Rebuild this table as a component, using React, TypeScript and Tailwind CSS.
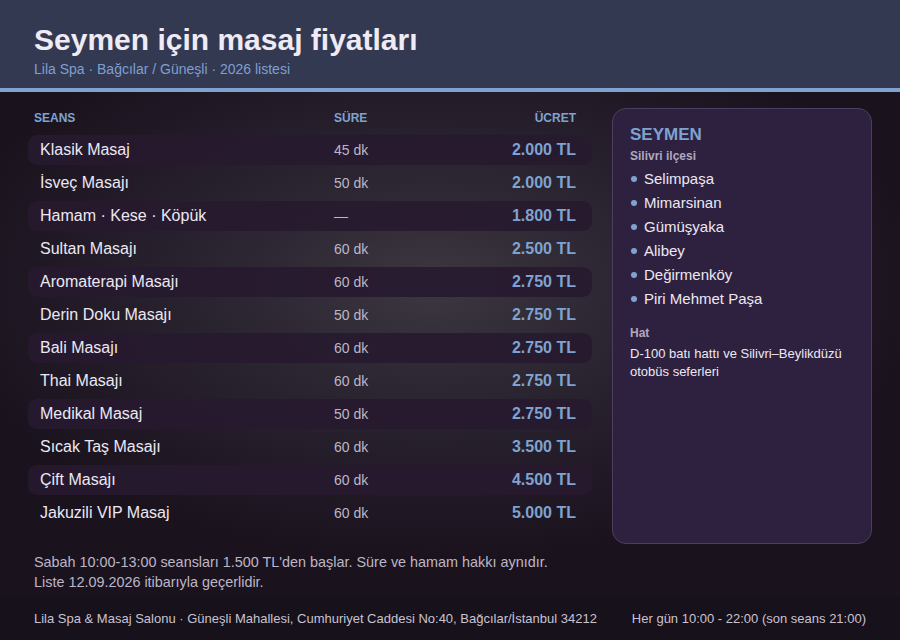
import React from 'react';

interface Seans {
    name: string;
    sure: string;
    ucret: string;
}

const seanslar: Seans[] = [
    { name: 'Klasik Masaj', sure: '45 dk', ucret: '2.000 TL' },
    { name: 'İsveç Masajı', sure: '50 dk', ucret: '2.000 TL' },
    { name: 'Hamam · Kese · Köpük', sure: '—', ucret: '1.800 TL' },
    { name: 'Sultan Masajı', sure: '60 dk', ucret: '2.500 TL' },
    { name: 'Aromaterapi Masajı', sure: '60 dk', ucret: '2.750 TL' },
    { name: 'Derin Doku Masajı', sure: '50 dk', ucret: '2.750 TL' },
    { name: 'Bali Masajı', sure: '60 dk', ucret: '2.750 TL' },
    { name: 'Thai Masajı', sure: '60 dk', ucret: '2.750 TL' },
    { name: 'Medikal Masaj', sure: '50 dk', ucret: '2.750 TL' },
    { name: 'Sıcak Taş Masajı', sure: '60 dk', ucret: '3.500 TL' },
    { name: 'Çift Masajı', sure: '60 dk', ucret: '4.500 TL' },
    { name: 'Jakuzili VIP Masaj', sure: '60 dk', ucret: '5.000 TL' },
];

const mahalleler = ['Selimpaşa', 'Mimarsinan', 'Gümüşyaka', 'Alibey', 'Değirmenköy', 'Piri Mehmet Paşa'];

export default function App() {
    return (
        <div className="flex h-[640px] w-[900px] flex-col overflow-hidden bg-[#1b141f] font-['Liberation_Sans',Arial,sans-serif]">
            {/* Header */}
            <header className="h-[88px] shrink-0 bg-[#333950] px-[34px] pt-[22px]">
                <h1 className="text-[30px] font-bold leading-[36px] text-[#eeeaf6]">Seymen için masaj fiyatları</h1>
                <p className="mt-[2px] text-[14px] leading-[18px] text-[#7f9fd0]">Lila Spa · Bağcılar / Güneşli · 2026 listesi</p>
            </header>
            <div className="h-[4px] shrink-0 bg-[#7fa3d0]" />

            {/* Main */}
            <main className="flex flex-1 flex-col bg-[radial-gradient(ellipse_55%_55%_at_48%_38%,#3c3741_0%,#2a2330_45%,#1a131e_100%)] px-[28px] pt-[16px]">
                <div className="flex gap-[20px]">
                    <div className="w-[564px]">
                        <div className="grid h-[20px] grid-cols-[300px_1fr_auto] items-center px-[6px] pr-[16px] text-[12px] font-bold text-[#7fa3d0]">
                            <span>SEANS</span>
                            <span>SÜRE</span>
                            <span className="text-right">ÜCRET</span>
                        </div>
                        <div className="mt-[7px] flex flex-col gap-[3px]">
                            {seanslar.map((s, i) => (
                                <div
                                    key={s.name}
                                    className={`grid h-[30px] grid-cols-[294px_1fr_auto] items-center rounded-[9px] pl-[12px] pr-[16px] ${
                                        i % 2 === 0 ? 'bg-[#27192f]/90' : ''
                                    }`}
                                >
                                    <span className="text-[16px] text-[#ece8f2]">{s.name}</span>
                                    <span className="text-[14px] text-[#bdb6c6]">{s.sure}</span>
                                    <span className="text-right text-[16px] font-bold text-[#7fa3d0]">{s.ucret}</span>
                                </div>
                            ))}
                        </div>
                    </div>

                    {/* Side card */}
                    <aside className="h-[436px] w-[260px] rounded-[14px] border border-[#4b3e60] bg-[#2e2140] px-[17px] pt-[16px]">
                        <h2 className="text-[17px] font-bold leading-[20px] text-[#7fa3d0]">SEYMEN</h2>
                        <p className="mt-[3px] text-[12px] font-bold leading-[16px] text-[#b1a8bf]">Silivri ilçesi</p>
                        <ul className="mt-[3px] flex flex-col">
                            {mahalleler.map((m) => (
                                <li key={m} className="flex h-[24px] items-center gap-[7px] text-[15px] text-[#ece8f2]">
                                    <span className="ml-[1px] h-[6px] w-[6px] rounded-full bg-[#7fa3d0]" />
                                    {m}
                                </li>
                            ))}
                        </ul>
                        <p className="mt-[14px] text-[12px] font-bold leading-[16px] text-[#b1a8bf]">Hat</p>
                        <p className="mt-[4px] text-[13px] leading-[18px] text-[#ece8f2]">
                            D-100 batı hattı ve Silivri–Beylikdüzü otobüs seferleri
                        </p>
                    </aside>
                </div>

                <div className="mt-[8px] px-[6px] text-[14.4px] leading-[20px] text-[#bdb6c6]">
                    <p>Sabah 10:00-13:00 seansları 1.500 TL'den başlar. Süre ve hamam hakkı aynıdır.</p>
                    <p>Liste 12.09.2026 itibarıyla geçerlidir.</p>
                </div>
            </main>

            {/* Footer */}
            <footer className="flex h-[43px] shrink-0 items-center justify-between bg-[#16111b] px-[34px] text-[13px] text-[#c9c3d1]">
                <span>Lila Spa &amp; Masaj Salonu · Güneşli Mahallesi, Cumhuriyet Caddesi No:40, Bağcılar/İstanbul 34212</span>
                <span>Her gün 10:00 - 22:00 (son seans 21:00)</span>
            </footer>
        </div>
    );
}
